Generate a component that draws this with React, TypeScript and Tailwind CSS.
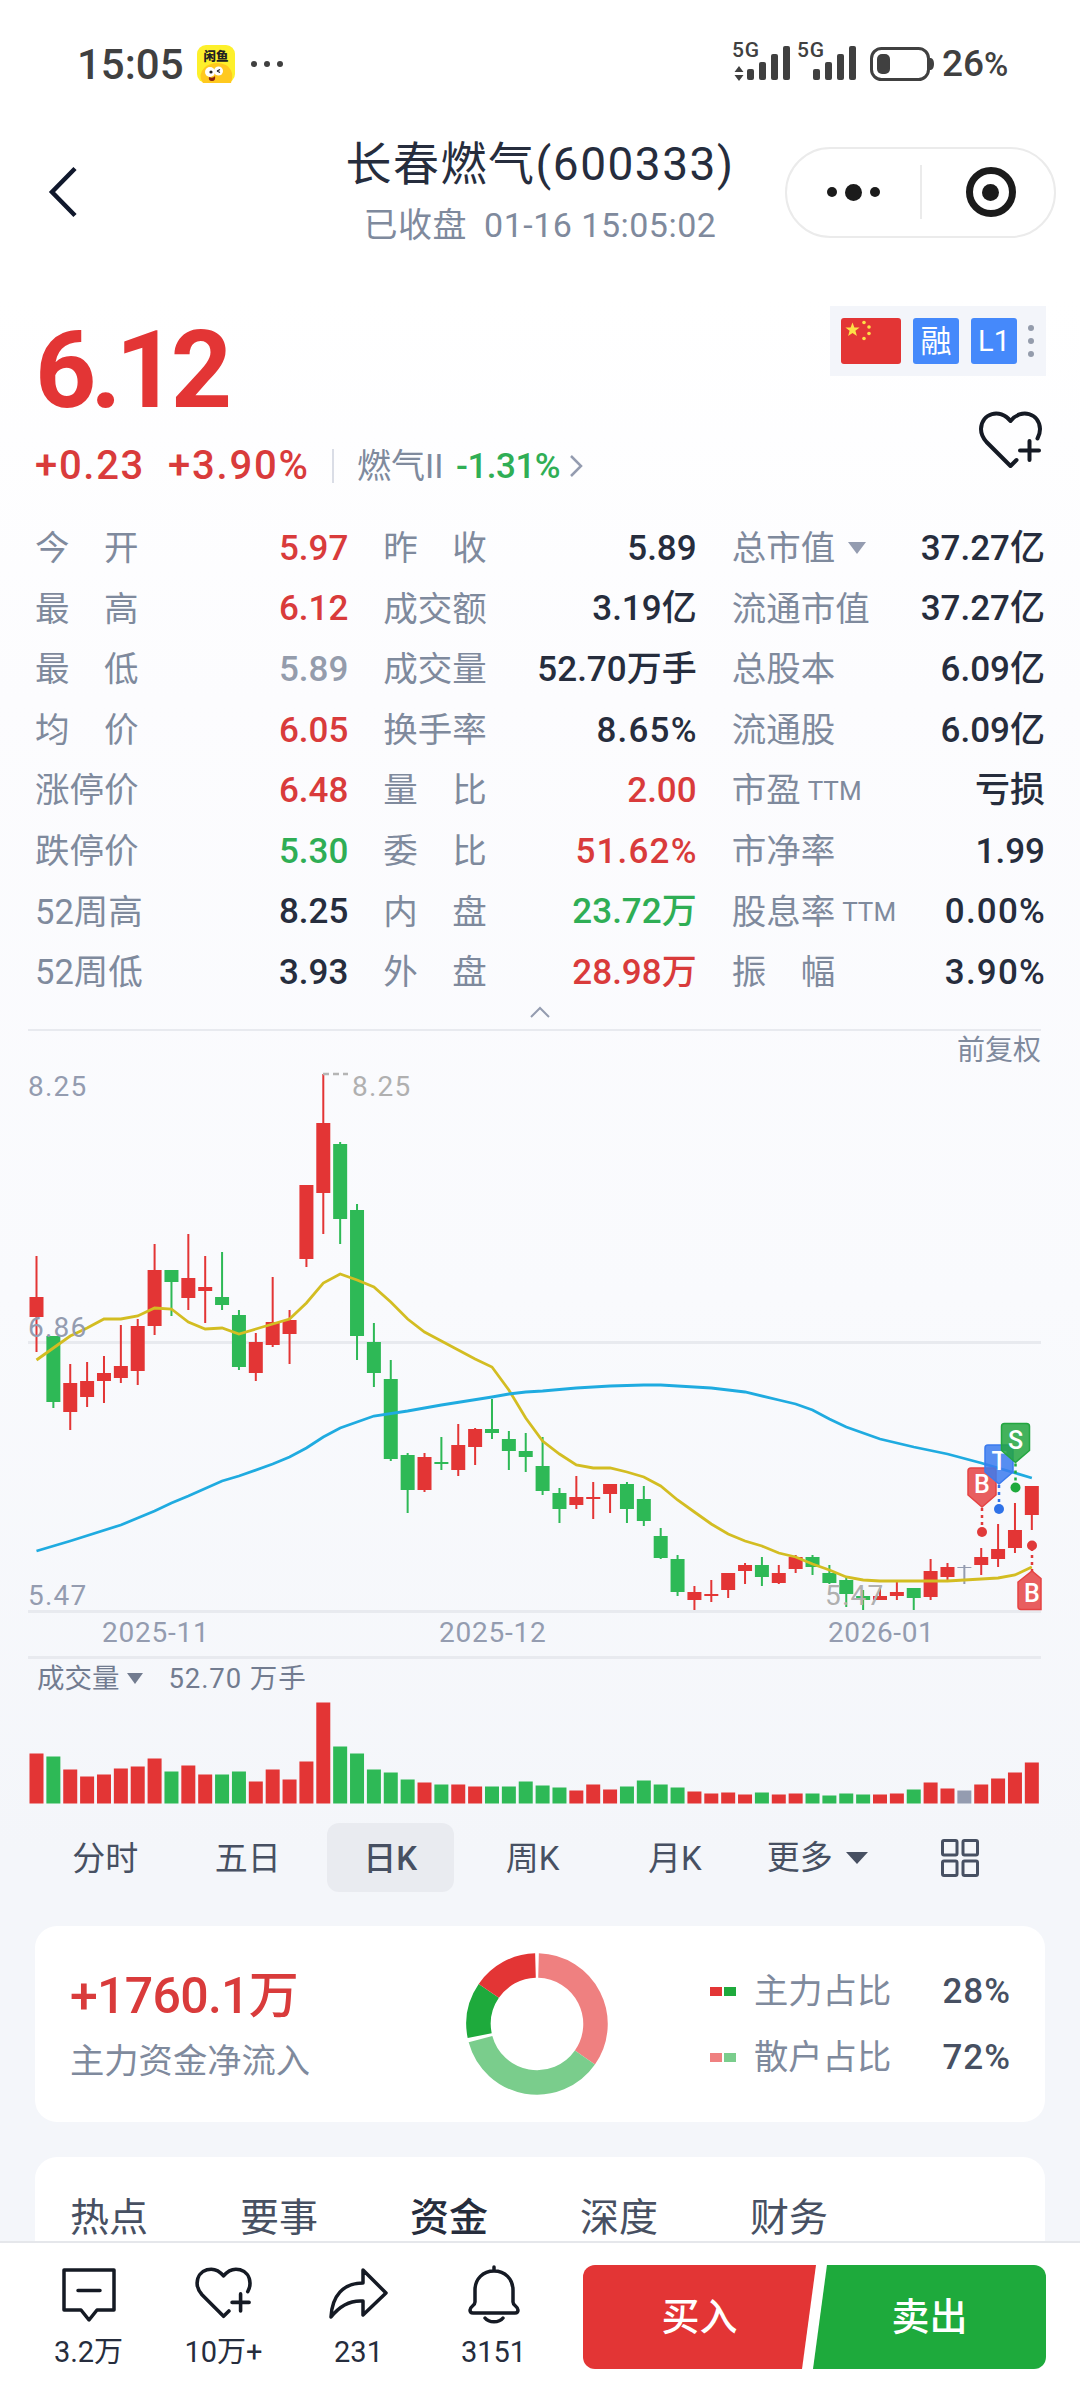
import type { ReactNode } from 'react';
import clsx from 'clsx';

type Tone = 'up' | 'down' | 'flat' | 'muted';

interface Quote {
  label: string;
  value: string;
  tone?: Tone;
  suffix?: string;
  dropdown?: boolean;
}

const toneClass: Record<Tone, string> = {
  up: 'text-[#d93b3b]',
  down: 'text-[#2fae55]',
  flat: 'text-[#262d3d]',
  muted: 'text-[#949cac]',
};

const quoteColumns: Quote[][] = [
  [
    { label: '今　开', value: '5.97', tone: 'up' },
    { label: '最　高', value: '6.12', tone: 'up' },
    { label: '最　低', value: '5.89', tone: 'muted' },
    { label: '均　价', value: '6.05', tone: 'up' },
    { label: '涨停价', value: '6.48', tone: 'up' },
    { label: '跌停价', value: '5.30', tone: 'down' },
    { label: '52周高', value: '8.25' },
    { label: '52周低', value: '3.93' },
  ],
  [
    { label: '昨　收', value: '5.89' },
    { label: '成交额', value: '3.19亿' },
    { label: '成交量', value: '52.70万手' },
    { label: '换手率', value: '8.65%' },
    { label: '量　比', value: '2.00', tone: 'up' },
    { label: '委　比', value: '51.62%', tone: 'up' },
    { label: '内　盘', value: '23.72万', tone: 'down' },
    { label: '外　盘', value: '28.98万', tone: 'up' },
  ],
  [
    { label: '总市值', value: '37.27亿', dropdown: true },
    { label: '流通市值', value: '37.27亿' },
    { label: '总股本', value: '6.09亿' },
    { label: '流通股', value: '6.09亿' },
    { label: '市盈', suffix: 'TTM', value: '亏损' },
    { label: '市净率', value: '1.99' },
    { label: '股息率', suffix: 'TTM', value: '0.00%' },
    { label: '振　幅', value: '3.90%' },
  ],
];

// [direction, high, body top, body bottom, low, volume]
type Candle = ['r' | 'g' | 'n', number, number, number, number, number];

const candles: Candle[] = [
  ['r', 1256, 1297, 1317, 1352, 50],
  ['g', 1336, 1336, 1402, 1408, 47],
  ['r', 1364, 1383, 1412, 1430, 34],
  ['r', 1362, 1381, 1397, 1407, 27],
  ['r', 1356, 1373, 1381, 1403, 29],
  ['r', 1325, 1366, 1378, 1383, 35],
  ['r', 1319, 1326, 1371, 1385, 37],
  ['r', 1244, 1270, 1326, 1335, 45],
  ['g', 1270, 1270, 1282, 1316, 32],
  ['r', 1234, 1278, 1298, 1310, 38],
  ['r', 1256, 1287, 1291, 1323, 29],
  ['g', 1252, 1297, 1305, 1310, 29],
  ['g', 1310, 1315, 1367, 1370, 32],
  ['r', 1333, 1342, 1373, 1381, 22],
  ['r', 1277, 1322, 1345, 1347, 34],
  ['r', 1310, 1320, 1334, 1364, 24],
  ['r', 1185, 1185, 1259, 1267, 42],
  ['r', 1074, 1123, 1193, 1234, 101],
  ['g', 1142, 1144, 1219, 1244, 57],
  ['g', 1204, 1210, 1336, 1360, 50],
  ['g', 1323, 1342, 1373, 1387, 34],
  ['g', 1360, 1379, 1459, 1461, 31],
  ['g', 1453, 1455, 1490, 1513, 24],
  ['r', 1453, 1457, 1490, 1492, 21],
  ['g', 1437, 1462, 1464, 1470, 19],
  ['r', 1424, 1445, 1470, 1476, 19],
  ['r', 1428, 1429, 1447, 1465, 17],
  ['g', 1399, 1429, 1433, 1439, 17],
  ['g', 1431, 1439, 1451, 1470, 17],
  ['g', 1433, 1451, 1457, 1472, 22],
  ['g', 1437, 1466, 1491, 1495, 18],
  ['g', 1488, 1493, 1509, 1523, 16],
  ['r', 1476, 1497, 1505, 1509, 13],
  ['r', 1482, 1497, 1499, 1519, 19],
  ['r', 1484, 1484, 1494, 1513, 14],
  ['g', 1482, 1484, 1509, 1523, 17],
  ['g', 1486, 1499, 1521, 1526, 23],
  ['g', 1528, 1536, 1558, 1559, 19],
  ['g', 1555, 1559, 1592, 1596, 16],
  ['r', 1586, 1592, 1600, 1610, 12],
  ['r', 1580, 1594, 1596, 1602, 10],
  ['r', 1573, 1573, 1590, 1598, 11],
  ['r', 1563, 1565, 1571, 1584, 9],
  ['g', 1557, 1565, 1577, 1586, 11],
  ['r', 1565, 1573, 1583, 1584, 9],
  ['r', 1555, 1557, 1569, 1573, 10],
  ['g', 1555, 1557, 1567, 1575, 10],
  ['g', 1565, 1573, 1583, 1584, 8],
  ['g', 1577, 1580, 1594, 1607, 10],
  ['g', 1590, 1596, 1600, 1610, 9],
  ['r', 1588, 1596, 1600, 1600, 9],
  ['r', 1582, 1592, 1596, 1600, 10],
  ['g', 1588, 1588, 1598, 1610, 14],
  ['r', 1559, 1571, 1597, 1600, 21],
  ['r', 1563, 1567, 1577, 1582, 15],
  ['n', 1565, 1567, 1568, 1584, 13],
  ['r', 1548, 1557, 1565, 1575, 19],
  ['r', 1524, 1549, 1559, 1567, 25],
  ['r', 1503, 1530, 1548, 1553, 31],
  ['r', 1486, 1486, 1515, 1530, 41],
];

const shortAverage = [
  1360, 1348, 1336, 1328, 1319, 1319, 1316, 1308, 1309, 1322, 1329, 1328, 1334, 1329, 1324,
  1319, 1303, 1283, 1274, 1280, 1287, 1302, 1319, 1332, 1341, 1350, 1359, 1367, 1390, 1418,
  1441, 1454, 1465, 1468, 1468, 1472, 1477, 1486, 1500, 1512, 1524, 1534, 1541, 1546, 1553,
  1557, 1564, 1570, 1577, 1580, 1581, 1581, 1581, 1581, 1581, 1580, 1579, 1578, 1575, 1567,
];

// [candle index, y]
const longAverage: [number, number][] = [
  [0, 1551], [2, 1541], [5, 1525], [6, 1518], [7, 1511], [8, 1503], [9, 1496], [11, 1481],
  [12, 1476], [14, 1464], [15, 1457], [16, 1448], [17, 1437], [18, 1428], [19, 1422],
  [20, 1416], [22, 1411], [24, 1405], [27, 1397], [28, 1394], [29, 1392], [30, 1391],
  [32, 1388], [34, 1386], [36, 1385], [37, 1385], [40, 1388], [42, 1392], [44, 1400],
  [45, 1404], [46, 1410], [47, 1419], [48, 1427], [50, 1439], [52, 1447], [54, 1454],
  [56, 1463], [59, 1478],
];

const candleFill = { r: '#e33535', g: '#2eb956', n: '#949cb0' };
const candleX = (i: number) => 36.5 + i * 16.87;

function HeartPlus({ className }: { className?: string }) {
  return (
    <svg className={className} viewBox="0 0 64 58" fill="none" stroke="#151a24" strokeWidth="4" strokeLinecap="round" strokeLinejoin="round">
      <path d="M58.500 27.500Q61 23 61 18C60.500 2 42 -3 31.500 10C21 -3 2.500 2 2 18C2 23 4 27 7.500 31L31.500 55L37.500 49" />
      <path d="M50.500 30V49M41 39.500H60" />
    </svg>
  );
}

function StatusBar() {
  return (
    <div className="flex h-32 items-center justify-between pl-[77px] pr-[69px] text-[#404040]">
      <div className="flex items-center">
        <span className="w-[105px] text-[42px] font-medium">15:05</span>
        <svg className="ml-[15px] h-[38px] w-[38px]" viewBox="0 0 38 38">
          <rect width="38" height="38" rx="9" fill="#fdf02b" />
          <text x="19" y="16" fontSize="12.500" fontWeight="900" textAnchor="middle" fill="#222">闲鱼</text>
          <path d="M6 38Q0 30 8 22Q18 15 29 20Q38 26 34 38Z" fill="#ffc91f" />
          <circle cx="13" cy="27" r="5" fill="#fff" />
          <circle cx="21.500" cy="26" r="4.500" fill="#fff" />
          <circle cx="14" cy="27" r="1.600" fill="#222" />
          <path d="M20 26l3-1.500M20 26l3 1.500" stroke="#222" strokeWidth="1.200" />
          <path d="M12 32q4 2 6-1q1 5-3 5t-3-4z" fill="#8a2412" />
        </svg>
        <div className="ml-[16px] flex gap-[7px]">
          <i className="h-[6px] w-[6px] rounded-full bg-[#404040]" />
          <i className="h-[6px] w-[6px] rounded-full bg-[#404040]" />
          <i className="h-[6px] w-[6px] rounded-full bg-[#404040]" />
        </div>
      </div>
      <div className="flex items-center">
        <svg className="h-[60px] w-[128px]" viewBox="0 -6 128 60" fill="#404040">
          <text x="0" y="17" fontSize="21" fontWeight="500" textLength="27">5G</text>
          <path d="M7 26l4.500 6h-9zM7 41l4.500-6h-9z" />
          <rect x="15" y="29" width="7" height="11" rx="2" />
          <rect x="27" y="22" width="7" height="18" rx="2" />
          <rect x="39" y="14" width="7" height="26" rx="2" />
          <rect x="51" y="6" width="7" height="34" rx="2" />
          <text x="65" y="17" fontSize="21" fontWeight="500" textLength="27">5G</text>
          <rect x="81" y="29" width="7" height="11" rx="2" />
          <rect x="93" y="22" width="7" height="18" rx="2" />
          <rect x="105" y="14" width="7" height="26" rx="2" />
          <rect x="117" y="6" width="7" height="34" rx="2" />
        </svg>
        <svg className="ml-[10px] h-[34px] w-[64px]" viewBox="0 0 64 34">
          <rect x="1.500" y="1.500" width="57" height="31" rx="10" fill="none" stroke="#404040" strokeWidth="3" />
          <rect x="7" y="7" width="13" height="20" rx="5" fill="#404040" />
          <path d="M60 11h1q3 1 3 6t-3 6h-1z" fill="#404040" />
        </svg>
        <span className="ml-[8px] w-[69px] text-[37px] font-medium whitespace-nowrap">
          26<span className="text-[33px]">%</span>
        </span>
      </div>
    </div>
  );
}

function TitleBar() {
  return (
    <div className="grid h-[128px] grid-cols-[340px_400px_1fr] items-center">
      <svg className="ml-[48px] h-[52px] w-[30px]" viewBox="0 0 30 52" fill="none" stroke="#10182c" strokeWidth="4.500">
        <path d="M27 2.500L4 26L27 49.500" />
      </svg>
      <div className="flex flex-col items-center pt-[5px]">
        <h1 className="flex h-[62px] items-center text-[46px] tracking-[1.5px] whitespace-nowrap text-[#262d3d]">长春燃气(600333)</h1>
        <p className="flex h-[60px] items-center text-[34px] tracking-[0.5px] text-[#7f8a9d]">
          已收盘<span className="ml-[17px]">01-16 15:05:02</span>
        </p>
      </div>
      <div className="ml-[45px] flex h-[91px] w-[271px] items-center rounded-full border-2 border-[#ebebeb] bg-white">
        <div className="flex w-[133px] items-center justify-center gap-[8px]">
          <i className="h-[10px] w-[10px] rounded-full bg-[#1b1b1b]" />
          <i className="h-[17px] w-[17px] rounded-full bg-[#1b1b1b]" />
          <i className="h-[10px] w-[10px] rounded-full bg-[#1b1b1b]" />
        </div>
        <div className="h-[54px] w-[2px] bg-[#ebebeb]" />
        <div className="flex flex-1 justify-center pl-[5px]">
          <div className="flex h-[50px] w-[50px] items-center justify-center rounded-full border-[7px] border-[#1b1b1b]">
            <i className="h-[17px] w-[17px] rounded-full bg-[#1b1b1b]" />
          </div>
        </div>
      </div>
    </div>
  );
}

function PriceHeader() {
  return (
    <div className="flex h-[262px] justify-between pl-[35px] pr-[34px] pt-[30px]">
      <div>
        <div className="h-[148px] pt-[11px] text-[107px] leading-[148px] font-bold tracking-[-6px] text-[#e33535]">6.12</div>
        <div className="flex h-[64px] items-center leading-none">
          <span className="w-[133px] text-[40px] font-medium tracking-[1.7px] text-[#d93b3b]">+0.23</span>
          <span className="w-[140px] text-[40px] font-medium tracking-[1.8px] text-[#d93b3b]">+3.90%</span>
          <i className="ml-[24px] h-[34px] w-[2px] bg-[#dadde6]" />
          <span className="ml-[23px] w-[99px] text-[34px] text-[#7f8a9d]">燃气II</span>
          <span className="text-[35px] font-medium tracking-[-0.5px] text-[#2fae55]">-1.31%</span>
          <svg className="ml-[9px] h-[24px] w-[14px]" viewBox="0 0 14 24" fill="none" stroke="#949cb0" strokeWidth="2.500">
            <path d="M2 2L12 12L2 22" />
          </svg>
        </div>
      </div>
      <div className="flex flex-col items-end">
        <div className="mt-[20px] flex h-[70px] w-[216px] items-center bg-[#f3f5fa] pl-[11px] text-white">
          <svg className="h-[46px] w-[60px]" viewBox="0 0 60 46" fill="#fde047">
            <rect width="60" height="46" rx="3" fill="#e33535" />
            <path d="M11.500 4.500l1.900 5h5.200l-4.200 3.300 1.500 5.200-4.400-3.100-4.400 3.100 1.500-5.200-4.200-3.300h5.200z" />
            <circle cx="23" cy="4.500" r="1.800" />
            <circle cx="28" cy="9" r="1.800" />
            <circle cx="28" cy="15.500" r="1.800" />
            <circle cx="23" cy="20.500" r="1.800" />
          </svg>
          <div className="ml-[12px] flex h-[46px] w-[46px] items-center justify-center rounded-[3px] bg-[#4589fb] text-[31px] leading-none">融</div>
          <div className="ml-[12px] flex h-[46px] w-[46px] items-center justify-center rounded-[3px] bg-[#4589fb] text-[29px] leading-none">L1</div>
          <div className="ml-[11px] flex flex-col gap-[7px]">
            <i className="h-[6px] w-[6px] rounded-full bg-[#949cac]" />
            <i className="h-[6px] w-[6px] rounded-full bg-[#949cac]" />
            <i className="h-[6px] w-[6px] rounded-full bg-[#949cac]" />
          </div>
        </div>
        <HeartPlus className="mt-[35px] mr-[3px] h-[58px] w-[64px]" />
      </div>
    </div>
  );
}

function QuoteRow({ label, value, tone = 'flat', suffix, dropdown }: Quote) {
  return (
    <div className="flex h-[60.6px] items-center justify-between leading-none whitespace-nowrap">
      <span className="flex items-center text-[34.5px] text-[#7f8a9d]">
        {label}
        {suffix && <span className="ml-[7px] text-[26px]">{suffix}</span>}
        {dropdown && (
          <svg className="ml-[13px] h-[12px] w-[18px]" viewBox="0 0 18 12" fill="#949cb0">
            <path d="M0 0H18L9 12Z" />
          </svg>
        )}
      </span>
      <span
        className={clsx(
          'text-[35px] font-medium',
          toneClass[tone],
          value.endsWith('%') && '-mr-[1px] tracking-[1.2px]'
        )}
      >
        {value}
      </span>
    </div>
  );
}

function QuoteTable() {
  return (
    <div className="grid h-[486px] grid-cols-3 gap-[35px] px-[35px]">
      {quoteColumns.map((column, i) => (
        <div key={i}>
          {column.map((quote) => (
            <QuoteRow key={quote.label} {...quote} />
          ))}
        </div>
      ))}
    </div>
  );
}

function TradeMark({ x, y, dotY, letter, fill, dot }: { x: number; y: number; dotY: number; letter: string; fill: string; dot: string }) {
  return (
    <g>
      <path d={`M${x} ${y + 40}V${dotY - 6}`} stroke={dot} strokeWidth="2.500" strokeDasharray="3 4" />
      <circle cx={x} cy={dotY} r="5" fill={dot} />
      <path
        d={`M${x - 11} ${y}h22q3 0 3 3v24l-14 12l-14 -12v-24q0-3 3-3z`}
        fill={fill}
        fillOpacity="0.85"
        stroke={fill}
        strokeWidth="1.500"
      />
      <text x={x} y={y + 25} fontSize="25" fontWeight="500" fill="#fff" textAnchor="middle">{letter}</text>
    </g>
  );
}

function KLineChart() {
  return (
    <svg className="block h-[627px] w-full" viewBox="0 1029 1080 627">
      <g fill="#e8eaef">
        <rect x="28" y="1341" width="1013" height="3" />
        <rect x="28" y="1610" width="1013" height="3" />
      </g>
      {candles.map(([dir, high, top, bottom, low], i) => (
        <g key={i} fill={candleFill[dir]}>
          <rect x={candleX(i) - 1} y={high} width="2" height={low - high} />
          <rect x={candleX(i) - 7} y={top} width="14" height={Math.max(bottom - top, 1)} />
        </g>
      ))}
      <polyline
        points={shortAverage.map((y, i) => `${candleX(i)},${y}`).join(' ')}
        fill="none"
        stroke="#d3bd22"
        strokeWidth="2.800"
      />
      <polyline
        points={longAverage.map(([i, y]) => `${candleX(i)},${y}`).join(' ')}
        fill="none"
        stroke="#1fabe0"
        strokeWidth="2.800"
      />
      <path d="M323 1074H348" stroke="#b5b5b5" strokeWidth="2.500" strokeDasharray="6 4" />
      <g fontSize="28" fill="#949cb0" letterSpacing="1.200">
        <text x="28" y="1096">8.25</text>
        <text x="28" y="1337">6.86</text>
        <text x="28" y="1605">5.47</text>
        <text x="102" y="1642" textLength="108">2025-11</text>
        <text x="439" y="1642" textLength="108">2025-12</text>
        <text x="828" y="1642" textLength="107">2026-01</text>
      </g>
      <g fontSize="28" fill="#b0b0b0" letterSpacing="1.200">
        <text x="352" y="1096">8.25</text>
        <text x="825" y="1605">5.47</text>
      </g>
      <text x="1041" y="1060" fontSize="28" fill="#7f8a9d" textAnchor="end">前复权</text>
      <TradeMark x={982} y={1468} dotY={1532} letter="B" fill="#e54343" dot="#e03a3a" />
      <TradeMark x={999} y={1445} dotY={1509} letter="T" fill="#3b7bee" dot="#2f72e8" />
      <TradeMark x={1015.5} y={1423.5} dotY={1487.5} letter="S" fill="#23a640" dot="#1eaa3c" />
      <g>
        <path d="M1032 1572V1548" stroke="#e03a3a" strokeWidth="2.500" strokeDasharray="3 4" />
        <circle cx="1032" cy="1545.500" r="5" fill="#e03a3a" />
        <path d="M1041 1609.500H1021q-3 0-3-3V1582l14-11l9 7.500z" fill="#e54343" fillOpacity="0.85" stroke="#e54343" strokeWidth="1.500" />
        <text x="1032" y="1602" fontSize="25" fontWeight="500" fill="#fff" textAnchor="middle">B</text>
      </g>
    </svg>
  );
}

function VolumePanel() {
  return (
    <div className="h-[155px]">
      <div className="ml-[28px] h-[3px] w-[1013px] bg-[#e8eaef]" />
      <div className="flex h-[38px] items-center pl-[37px] pt-[1px] text-[27.5px] leading-none text-[#727c90]">
        成交量
        <svg className="ml-[7px] h-[11px] w-[16px]" viewBox="0 0 16 11" fill="currentColor">
          <path d="M0 0H16L8 11Z" />
        </svg>
        <span className="ml-[26px] tracking-[0.9px]">52.70 万手</span>
      </div>
      <svg className="block h-[108px] w-full" viewBox="0 1697 1080 108">
        {candles.map(([dir, , , , , volume], i) => (
          <rect key={i} x={candleX(i) - 7} y={1803.5 - volume} width="14" height={volume} fill={candleFill[dir]} />
        ))}
      </svg>
    </div>
  );
}

function PeriodTabs() {
  const periods = ['分时', '五日', '日K', '周K', '月K'];
  return (
    <div className="mt-[12px] ml-[34px] grid h-[69px] w-[997px] grid-cols-7 text-[33px] leading-none text-[#475062]">
      {periods.map((period) => (
        <div key={period} className="flex justify-center">
          <span
            className={clsx(
              'flex w-[127px] items-center justify-center rounded-[12px] pt-[1px]',
              period === '日K' && 'bg-[#e9ebf0] font-medium'
            )}
          >
            {period}
          </span>
        </div>
      ))}
      <div className="flex items-center justify-center gap-[13px]">
        更多
        <svg className="h-[12px] w-[22px]" viewBox="0 0 22 12" fill="currentColor">
          <path d="M0 0H22L11 12Z" />
        </svg>
      </div>
      <div className="flex items-center justify-center">
        <svg className="h-[38px] w-[38px]" viewBox="0 0 38 38" fill="none" stroke="#475062" strokeWidth="3">
          <rect x="1.500" y="1.500" width="14.500" height="14.500" rx="1.500" />
          <rect x="22" y="1.500" width="14.500" height="14.500" rx="1.500" />
          <rect x="1.500" y="22" width="14.500" height="14.500" rx="1.500" />
          <rect x="22" y="22" width="14.500" height="14.500" rx="1.500" />
        </svg>
      </div>
    </div>
  );
}

const shares = [
  { from: 1.5, to: 125, color: '#ef8080' },
  { from: 125, to: 255, color: '#7acd8c' },
  { from: 258.5, to: 304.5, color: '#1eaa3c' },
  { from: 304.5, to: 358.5, color: '#e33535' },
];

function arcPath(from: number, to: number) {
  const point = (deg: number) => {
    const rad = (deg * Math.PI) / 180;
    return `${71 + 58.5 * Math.sin(rad)} ${71 - 58.5 * Math.cos(rad)}`;
  };
  return `M${point(from)}A58.5 58.5 0 0 1 ${point(to)}`;
}

function FundFlowCard() {
  const legend = [
    { label: '主力占比', value: '28%', up: 'bg-[#e33535]', down: 'bg-[#1eaa3c]' },
    { label: '散户占比', value: '72%', up: 'bg-[#ef8080]', down: 'bg-[#7acd8c]' },
  ];
  return (
    <section className="mx-[35px] mt-[34px] flex h-[196px] rounded-[22px] bg-white">
      <div className="w-[431px] pt-[38px] pl-[35px] leading-none">
        <div className="flex h-[64px] items-center text-[50px] font-medium tracking-[-0.7px] text-[#d93b3b]">+1760.1万</div>
        <div className="flex h-[66px] items-center text-[34.3px] text-[#7f8a9d]">主力资金净流入</div>
      </div>
      <svg className="mt-[27px] h-[142px] w-[142px]" viewBox="0 0 142 142" fill="none" strokeWidth="24.500">
        {shares.map(({ from, to, color }) => (
          <path key={color} d={arcPath(from, to)} stroke={color} />
        ))}
      </svg>
      <div className="ml-[102px] w-[300px] pt-[32px] text-[34.3px] leading-none">
        {legend.map((item) => (
          <div key={item.label} className="flex h-[66px] items-center">
            <i className={clsx('h-[9px] w-[12px]', item.up)} />
            <i className={clsx('ml-[2px] h-[9px] w-[12px]', item.down)} />
            <span className="ml-[18px] text-[#7f8a9d]">{item.label}</span>
            <span className="-mr-px ml-auto text-[35px] font-medium tracking-[1px] text-[#475062]">{item.value}</span>
          </div>
        ))}
      </div>
    </section>
  );
}

function SectionTabs() {
  const tabs = ['热点', '要事', '资金', '深度', '财务'];
  return (
    <section className="mx-[35px] mt-[35px] flex h-[84px] rounded-t-[22px] bg-white pt-[30px] pl-[35px] text-[39px] leading-none text-[#475062]">
      {tabs.map((tab) => (
        <span key={tab} className={clsx('flex h-[54px] w-[170px] items-center pt-[8px]', tab === '资金' && 'font-medium text-[#262d3d]')}>
          {tab}
        </span>
      ))}
    </section>
  );
}

function FooterItem({ label, children }: { label: string; children: ReactNode }) {
  return (
    <div className="flex w-[135.2px] flex-col items-center">
      <div className="flex h-[63px] items-start">{children}</div>
      <span className="flex h-[48px] items-center text-[29px] leading-none text-[#262d3d]">{label}</span>
    </div>
  );
}

function TradeFooter() {
  return (
    <footer className="flex h-[151px] border-t-2 border-[#e5e7eb] bg-white pt-[22px]">
      <div className="flex w-[561px] pl-[21px]">
        <FooterItem label="3.2万">
          <svg className="mt-[1px] h-[56px] w-[54px]" viewBox="0 0 54 56" fill="none" stroke="#151a24" strokeWidth="3.500" strokeLinecap="round" strokeLinejoin="round">
            <path d="M2 4H52V44H35L27 54L19 44H2ZM16 24.500H38" />
          </svg>
        </FooterItem>
        <FooterItem label="10万+">
          <HeartPlus className="mt-[2px] h-[52px] w-[58px]" />
        </FooterItem>
        <FooterItem label="231">
          <svg className="mt-[2px] h-[52px] w-[60px]" viewBox="0 0 60 52" fill="none" stroke="#151a24" strokeWidth="3.500" strokeLinejoin="round">
            <path d="M34 3L57 26L34 48V34C20 33 9 41 2 50C3 29 14 16 34 16Z" />
          </svg>
        </FooterItem>
        <FooterItem label="3151">
          <svg className="h-[59px] w-[54px]" viewBox="0 0 54 59" fill="none" stroke="#151a24" strokeWidth="3.500" strokeLinecap="round" strokeLinejoin="round">
            <path d="M27 2V6M27 6C16 6 8 14 8 25V37C8 41 3 41 3 45Q3 48 6 48H48Q51 48 51 45C51 41 46 41 46 37V25C46 14 38 6 27 6ZM18 53C22 58 32 58 36 53" />
          </svg>
        </FooterItem>
      </div>
      <div className="ml-[22px] flex h-[104px] w-[463px] text-[38px] leading-none font-medium text-white">
        <button className="w-[233px] rounded-l-[12px] bg-[#e33535] [clip-path:polygon(0_0,100%_0,94%_100%,0_100%)]">买入</button>
        <button className="-ml-[3px] w-[233px] rounded-r-[12px] bg-[#1eaa3c] [clip-path:polygon(6%_0,100%_0,100%_100%,0_100%)]">卖出</button>
      </div>
    </footer>
  );
}

export default function App() {
  return (
    <main className="h-[2392px] w-[1080px] overflow-hidden bg-[#f4f6fa] bg-[linear-gradient(#fff_0,#fff_300px,#fcfcfe_700px,#f9fafd_1300px,#f4f6fa_1850px)] font-['Roboto','Noto_Sans_CJK_SC',sans-serif]">
      <StatusBar />
      <TitleBar />
      <PriceHeader />
      <QuoteTable />
      <div className="flex h-[25px] justify-center pt-[2px]">
        <svg className="h-[12px] w-[20px]" viewBox="0 0 20 12" fill="none" stroke="#949cb0" strokeWidth="2">
          <path d="M1 11L10 2L19 11" />
        </svg>
      </div>
      <div className="ml-[28px] h-[2px] w-[1013px] bg-[#e8eaef]" />
      <div className="-mt-[2px]">
        <KLineChart />
      </div>
      <VolumePanel />
      <PeriodTabs />
      <FundFlowCard />
      <SectionTabs />
      <TradeFooter />
    </main>
  );
}
